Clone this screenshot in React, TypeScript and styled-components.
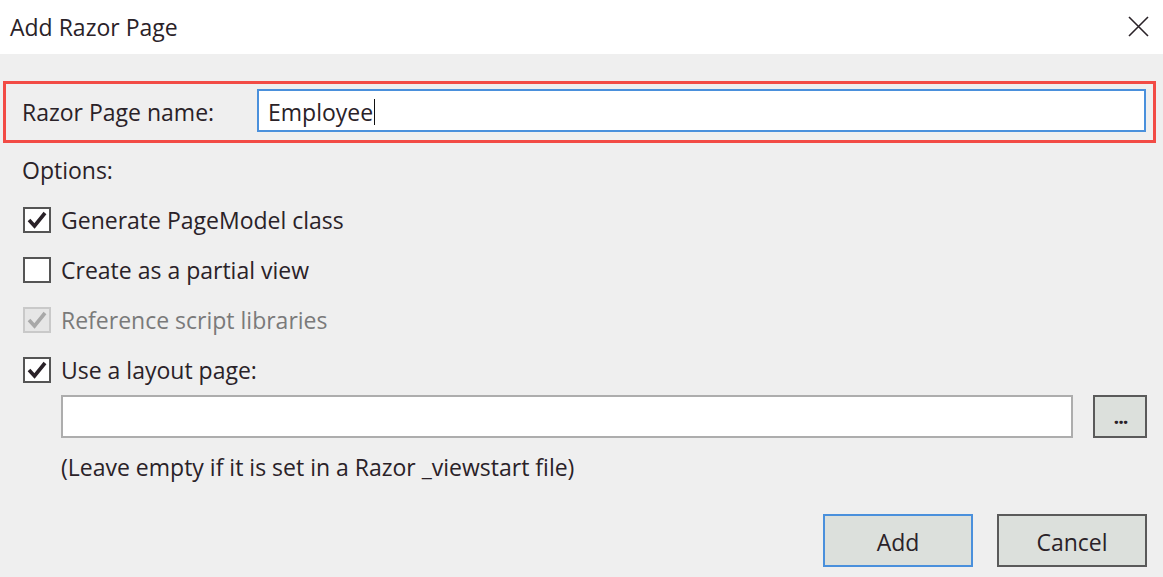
import React from 'react';
import styled, { createGlobalStyle } from 'styled-components';

const GlobalStyle = createGlobalStyle`
  html, body {
    margin: 0;
    padding: 0;
    background: #efefef;
  }
  body {
    font-family: "Open Sans", "Noto Sans", sans-serif;
    color: #2a2228;
  }
`;

const Dialog = styled.div`
  width: 1163px;
  height: 577px;
  background: #efefef;
  display: flex;
  flex-direction: column;
  overflow: hidden;
`;

const TitleBar = styled.div`
  height: 54px;
  background: #ffffff;
  display: flex;
  align-items: center;
  justify-content: space-between;
  padding: 0 14px 0 10px;
  box-sizing: border-box;
`;

const Title = styled.div`
  font-size: 23px;
  margin-top: -1px;
`;

const CloseButton = styled.button`
  width: 22px;
  height: 22px;
  padding: 0;
  border: none;
  background: transparent;
  display: flex;
  align-items: center;
  justify-content: center;
  margin-top: -2px;
`;

const Body = styled.div`
  display: flex;
  flex-direction: column;
  padding: 0 16px 0 0;
`;

const Highlight = styled.div`
  margin: 27px -9px 0 3px;
  height: 62px;
  box-sizing: border-box;
  border: 3px solid #f24b45;
  display: flex;
  align-items: center;
  padding: 0 7px 0 16px;
`;

const Label = styled.label`
  font-size: 23px;
  width: 235px;
  flex: none;
`;

const TextBox = styled.div<{ $focused?: boolean }>`
  flex: 1;
  height: 43px;
  box-sizing: border-box;
  background: #ffffff;
  border: 2px solid ${p => (p.$focused ? '#4a90dc' : '#adadad')};
  display: flex;
  align-items: center;
  padding: 3px 0 0 9px;
  font-size: 23px;
  margin-top: ${p => (p.$focused ? '-4px' : '0')};
`;

const Caret = styled.span`
  display: inline-block;
  width: 1px;
  height: 26px;
  background: #111;
  margin-left: 1px;
`;

const SectionLabel = styled.div`
  font-size: 23px;
  margin: 12px 0 0 22px;
  height: 30px;
  line-height: 30px;
`;

const OptionList = styled.div`
  display: flex;
  flex-direction: column;
  margin: 10px 0 0 23px;
`;

const OptionRow = styled.div<{ $disabled?: boolean }>`
  height: 50px;
  display: flex;
  align-items: center;
  gap: 10px;
  font-size: 23px;
  color: ${p => (p.$disabled ? '#7a7a7a' : 'inherit')};
`;

const Box = styled.span<{ $disabled?: boolean }>`
  width: 28px;
  height: 26px;
  box-sizing: border-box;
  border: 2px solid ${p => (p.$disabled ? '#c9c9c9' : '#555555')};
  background: ${p => (p.$disabled ? '#e6e6e6' : '#ffffff')};
  display: flex;
  align-items: center;
  justify-content: center;
  flex: none;
`;

const LayoutRow = styled.div`
  display: flex;
  gap: 20px;
  margin: 0 0 0 61px;
  height: 43px;
`;

const BrowseButton = styled.button`
  width: 54px;
  height: 43px;
  box-sizing: border-box;
  background: #dce0dc;
  border: 2px solid #5a5a5a;
  font-family: inherit;
  font-size: 20px;
  font-weight: 700;
  letter-spacing: -1px;
  color: #2a2228;
  padding: 0 0 0 1px;
  line-height: 1;
  display: flex;
  align-items: center;
  justify-content: center;
`;

const Hint = styled.div`
  font-size: 23px;
  margin: 14px 0 0 61px;
  height: 30px;
  line-height: 30px;
`;

const Footer = styled.div`
  display: flex;
  justify-content: flex-end;
  gap: 24px;
  margin-top: 32px;
`;

const ActionButton = styled.button<{ $default?: boolean }>`
  width: 150px;
  height: 53px;
  box-sizing: border-box;
  background: #dce0dc;
  border: 2px solid ${p => (p.$default ? '#4a90dc' : '#5a5a5a')};
  font-family: inherit;
  font-size: 23px;
  color: #2a2228;
  padding: 3px 0 0;
`;

const Check = ({ color }: { color: string }) => (
  <svg width="22" height="20" viewBox="0 0 22 20">
    <polyline points="3,10 8.5,16 19,3" fill="none" stroke={color} strokeWidth="3.6" strokeLinejoin="miter" />
  </svg>
);

const options = [
  { label: 'Generate PageModel class', checked: true, disabled: false },
  { label: 'Create as a partial view', checked: false, disabled: false },
  { label: 'Reference script libraries', checked: true, disabled: true },
  { label: 'Use a layout page:', checked: true, disabled: false },
];

export default function App() {
  return (
    <>
      <GlobalStyle />
      <Dialog>
        <TitleBar>
          <Title>Add Razor Page</Title>
          <CloseButton aria-label="Close">
            <svg width="21" height="21" viewBox="0 0 21 21">
              <path d="M1 1 L20 20 M20 1 L1 20" stroke="#2a2228" strokeWidth="1.6" />
            </svg>
          </CloseButton>
        </TitleBar>
        <Body>
          <Highlight>
            <Label>Razor Page name:</Label>
            <TextBox $focused>
              Employee<Caret />
            </TextBox>
          </Highlight>
          <SectionLabel>Options:</SectionLabel>
          <OptionList>
            {options.map(o => (
              <OptionRow key={o.label} $disabled={o.disabled}>
                <Box $disabled={o.disabled}>
                  {o.checked && <Check color={o.disabled ? '#a8a8a8' : '#2a2228'} />}
                </Box>
                {o.label}
              </OptionRow>
            ))}
          </OptionList>
          <LayoutRow>
            <TextBox />
            <BrowseButton>...</BrowseButton>
          </LayoutRow>
          <Hint>(Leave empty if it is set in a Razor _viewstart file)</Hint>
          <Footer>
            <ActionButton $default>Add</ActionButton>
            <ActionButton>Cancel</ActionButton>
          </Footer>
        </Body>
      </Dialog>
    </>
  );
}
